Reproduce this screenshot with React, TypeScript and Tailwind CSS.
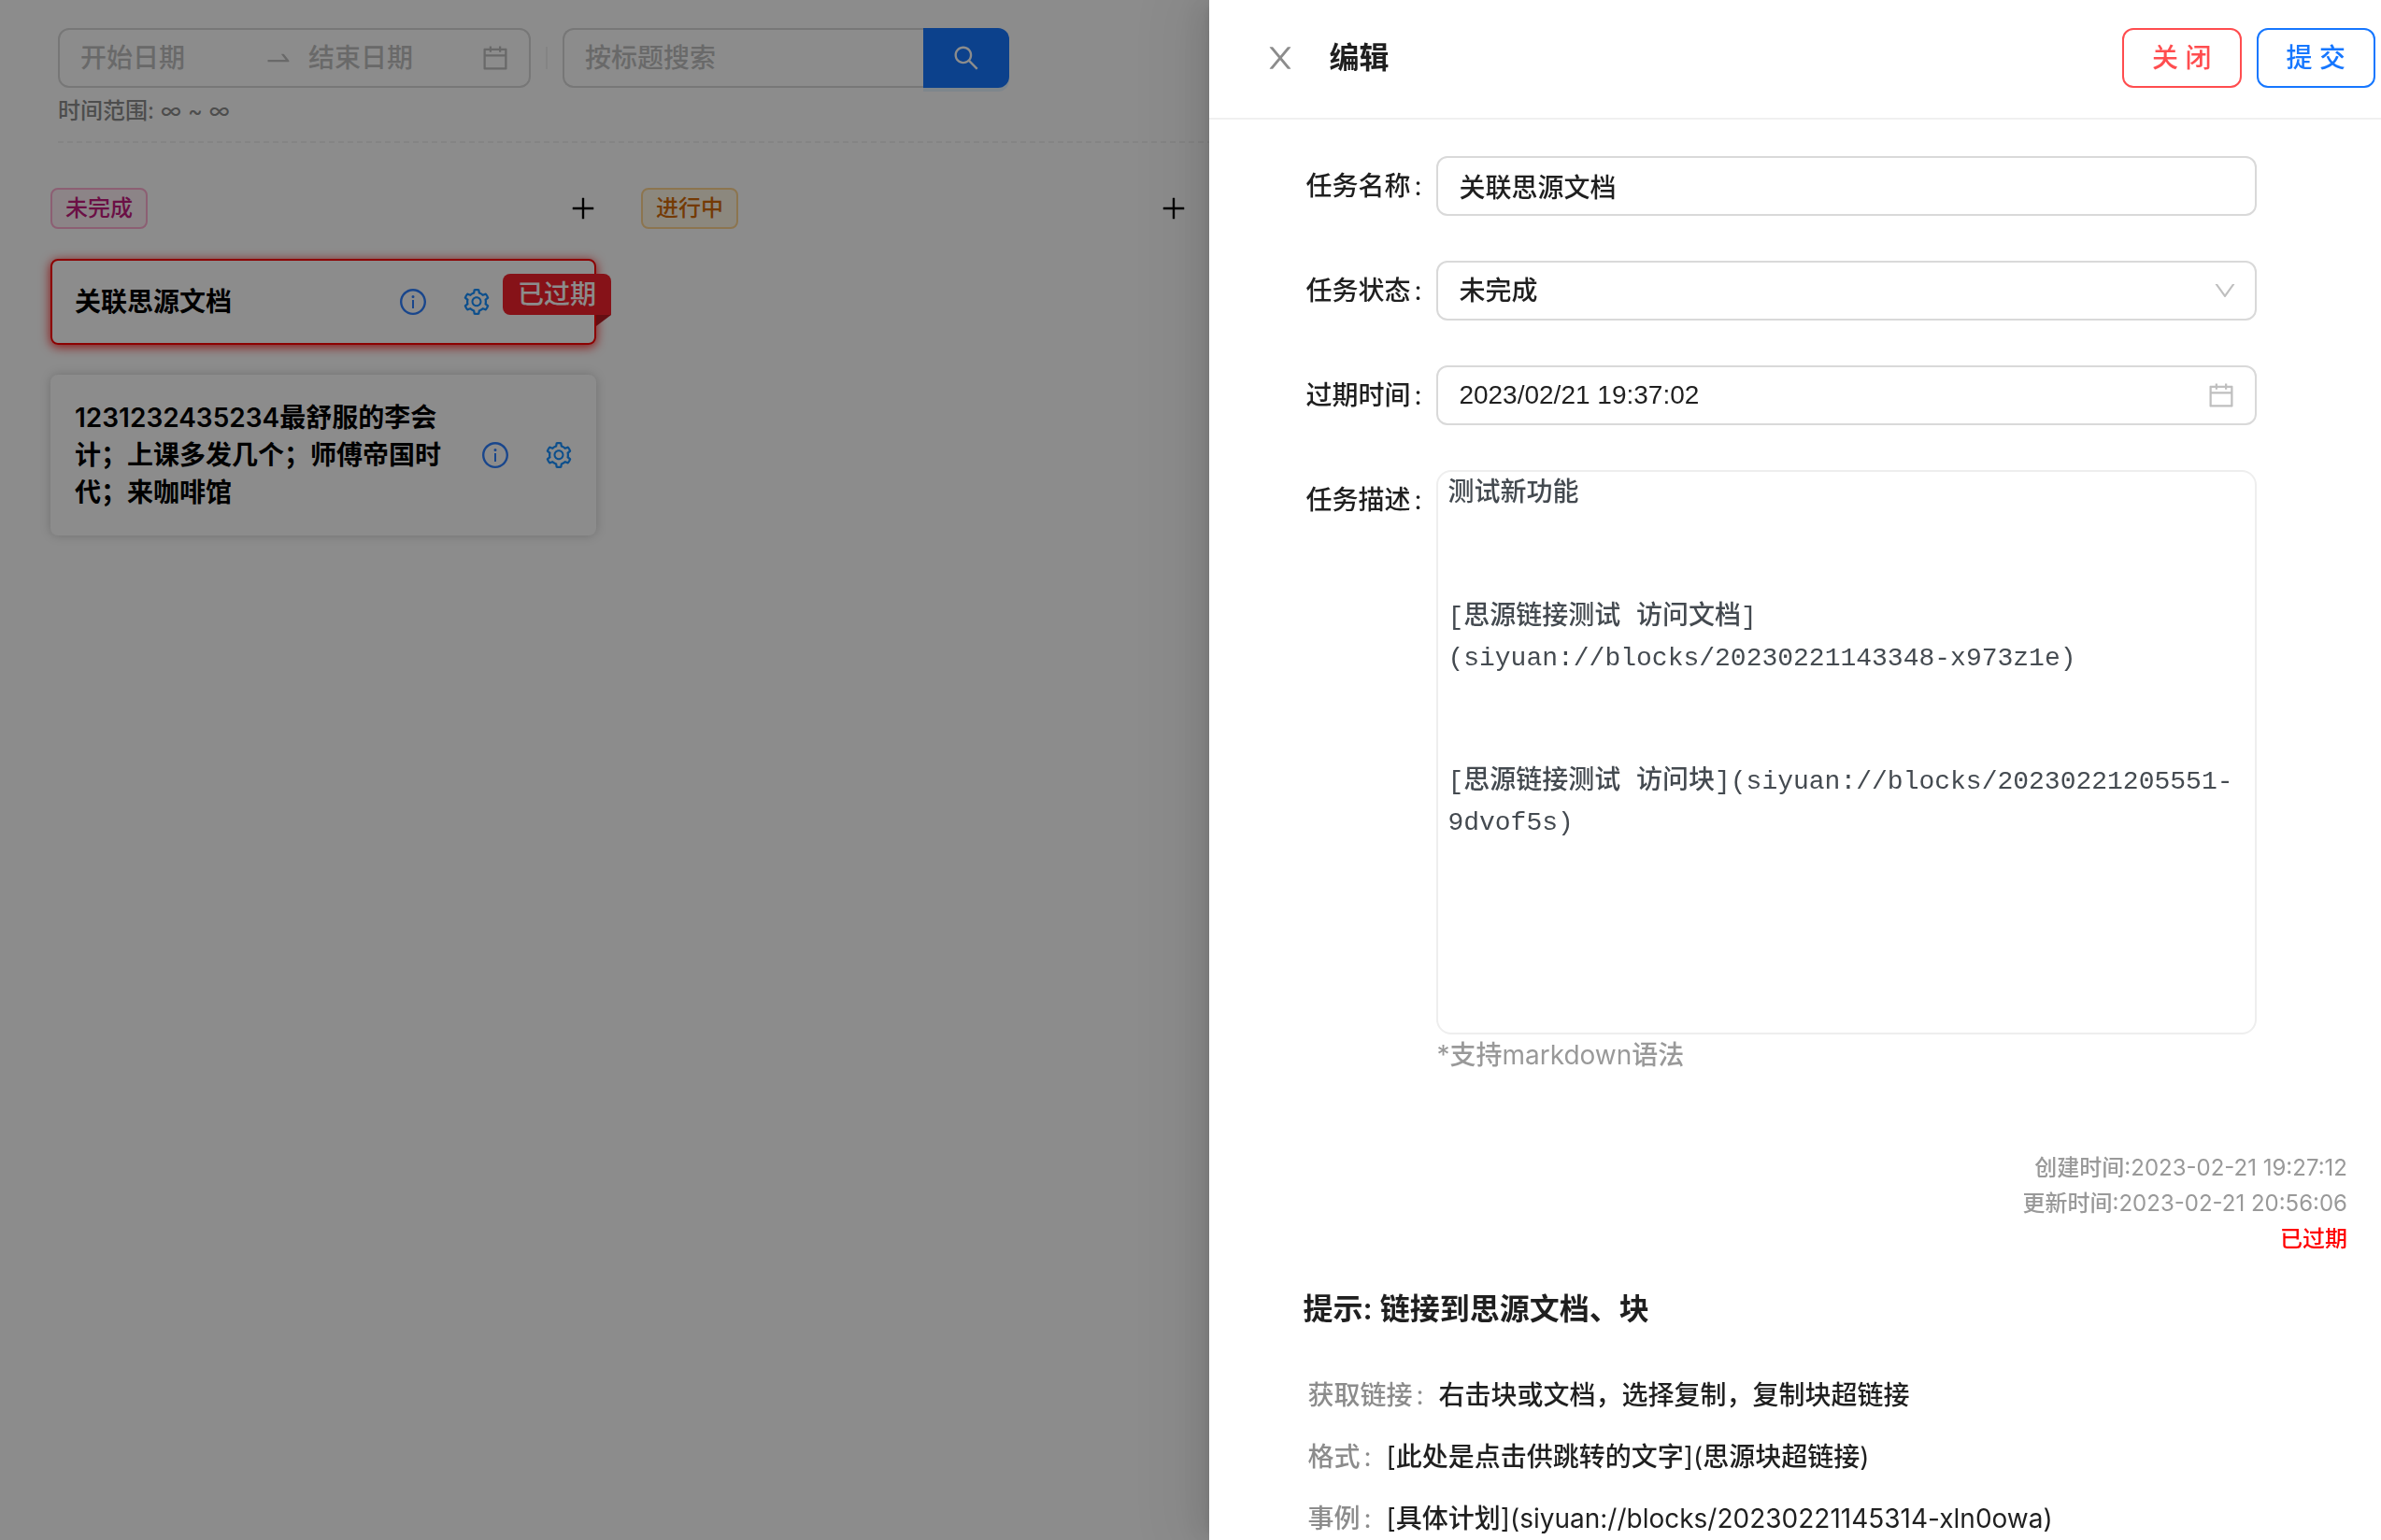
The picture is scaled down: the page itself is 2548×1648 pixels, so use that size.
import React from "react";
import {
  AiOutlineCalendar,
  AiOutlineDown,
  AiOutlineInfoCircle,
  AiOutlinePlus,
  AiOutlineSearch,
  AiOutlineSetting,
  AiOutlineSwapRight,
} from "react-icons/ai";

function CloseIcon() {
  return (
    <svg viewBox="64 64 896 896" className="size-8" fill="currentColor" aria-hidden="true">
      <path d="M563.8 512l262.5-312.9c4.4-5.2.7-13.1-6.1-13.1h-79.8c-4.7 0-9.2 2.1-12.3 5.7L511.6 449.8 295.1 191.7c-3-3.6-7.5-5.7-12.3-5.7H203c-6.8 0-10.5 7.9-6.1 13.1L459.4 512 196.9 824.9A7.95 7.95 0 0 0 203 838h79.8c4.7 0 9.2-2.1 12.3-5.7l216.5-258.1 216.5 258.1c3 3.6 7.5 5.7 12.3 5.7h79.8c6.8 0 10.5-7.9 6.1-13.1L563.8 512z" />
    </svg>
  );
}

function ColumnHeader({ title, tone }: { title: string; tone: string }) {
  return (
    <header className="flex items-center justify-between">
      <span className={`rounded-lg border-2 px-3.5 text-2xl leading-10 ${tone}`}>{title}</span>
      <button type="button" aria-label={`新增${title}`} className="-mr-0.5 text-black">
        <AiOutlinePlus size={32} />
      </button>
    </header>
  );
}

function CardActions() {
  return (
    <div className="flex shrink-0 items-center gap-9">
      <button type="button" aria-label="详情" className="text-[#2f80ff]">
        <AiOutlineInfoCircle size={32} />
      </button>
      <button type="button" aria-label="设置" className="text-[#1890ff]">
        <AiOutlineSetting size={32} />
      </button>
    </div>
  );
}

function Board() {
  return (
    <div className="min-h-screen bg-white text-[28px]">
      <div className="pt-[30px] pl-[62px]">
        <form className="flex items-center gap-4">
          <div className="flex h-16 w-[506px] items-center rounded-xl border-2 border-[#d9d9d9] pr-5 pl-[22px]">
            <input
              aria-label="开始日期"
              placeholder="开始日期"
              className="w-[196px] outline-none placeholder:text-[#bfbfbf]"
            />
            <AiOutlineSwapRight size={32} className="shrink-0 text-[#bfbfbf]" />
            <input
              aria-label="结束日期"
              placeholder="结束日期"
              className="ml-4 min-w-0 flex-1 outline-none placeholder:text-[#bfbfbf]"
            />
            <AiOutlineCalendar size={32} className="shrink-0 text-[#bfbfbf]" />
          </div>
          <span className="h-6 w-0.5 bg-[#f0f0f0]" />
          <div className="flex h-16">
            <input
              aria-label="按标题搜索"
              placeholder="按标题搜索"
              className="w-[386px] rounded-l-xl border-2 border-r-0 border-[#d9d9d9] px-[22px] outline-none placeholder:text-[#bfbfbf]"
            />
            <button
              type="submit"
              aria-label="搜索"
              className="flex w-[92px] items-center justify-center rounded-r-xl bg-[#1677ff] text-white shadow-[0_4px_0_rgba(5,145,255,0.1)]"
            >
              <AiOutlineSearch size={32} />
            </button>
          </div>
        </form>
        <p className="mt-1.5 text-2xl leading-[38px] text-[#8c8c8c]">
          时间范围<Latin>: ∞ ~ ∞</Latin>
        </p>
        <div className="mt-[13px] border-t-2 border-dashed border-[#f0f0f0]" />
      </div>

      <main className="mt-12 flex items-start gap-12 pl-[54px]">
        <section className="w-[584px]">
          <ColumnHeader title="未完成" tone="border-[#ffadd2] bg-[#fff0f6] text-[#c41d7f]" />
          <article className="relative mt-8 flex h-[92px] items-center justify-between rounded-lg border-2 border-[#ff0000] pr-[110px] pl-6 shadow-[0_2px_12px_rgba(255,0,0,0.9)]">
            <h3 className="font-semibold text-black">关联思源文档</h3>
            <CardActions />
            <div className="absolute top-3.5 -right-[18px] rounded-lg rounded-br-none bg-[#f5222d] px-4 leading-[44px] text-white">
              已过期
              <span className="absolute top-full right-0 border-t-12 border-r-16 border-t-[#b81a22] border-r-transparent" />
            </div>
          </article>
          <article className="mt-8 flex items-center justify-between gap-9 rounded-lg border-2 border-transparent py-6 pr-[22px] pl-6 shadow-[0_0_12px_rgba(0,0,0,0.2)]">
            <h3 className="leading-10 font-semibold text-black">
              1231232435234最舒服的李会计；上课多发几个；师傅帝国时代；来咖啡馆
            </h3>
            <CardActions />
          </article>
        </section>
        <section className="w-[584px]">
          <ColumnHeader title="进行中" tone="border-[#ffd591] bg-[#fff7e6] text-[#d46b08]" />
        </section>
      </main>
    </div>
  );
}

function Field({ label, id, children }: { label: string; id: string; children: React.ReactNode }) {
  return (
    <div className="flex items-start">
      <label htmlFor={id} className="w-[140px] shrink-0 leading-[64px]">
        {label}
        <span className="ml-1 font-normal">:</span>
      </label>
      <div className="relative min-w-0 flex-1">{children}</div>
    </div>
  );
}

const description = `测试新功能


[思源链接测试 访问文档]
(siyuan://blocks/20230221143348-x973z1e)


[思源链接测试 访问块](siyuan://blocks/20230221205551-9dvof5s)`;

function Tip({ label, children }: { label: string; children: React.ReactNode }) {
  return (
    <div className="flex leading-[44px]">
      <dt className="text-[#8c8c8c]">
        {label}
        <span className="mr-4 ml-1 font-normal">:</span>
      </dt>
      <dd>{children}</dd>
    </div>
  );
}

function Latin({ children }: { children: React.ReactNode }) {
  return <span className="font-normal">{children}</span>;
}

function EditDrawer() {
  return (
    <aside
      role="dialog"
      aria-label="编辑"
      className="fixed inset-y-0 right-0 w-[49.2%] overflow-y-auto bg-white text-[28px] text-[#1f1f1f] shadow-[-12px_0_32px_0_rgba(0,0,0,0.08),-6px_0_12px_-8px_rgba(0,0,0,0.12),-18px_0_56px_16px_rgba(0,0,0,0.05)]"
    >
      <header className="flex h-32 items-center border-b-2 border-[#f0f0f0] pr-1.5 pb-0.5 pl-[60px]">
        <button type="button" aria-label="关闭面板" className="text-[#8c8c8c]">
          <CloseIcon />
        </button>
        <h2 className="ml-9 flex-1 text-[32px] font-semibold">编辑</h2>
        <div className="flex gap-4">
          <button type="button" className="h-16 rounded-xl border-2 border-[#ff4d4f] px-[30px] text-[#ff4d4f]">
            关 闭
          </button>
          <button type="button" className="h-16 rounded-xl border-2 border-[#1677ff] px-[30px] text-[#1677ff]">
            提 交
          </button>
        </div>
      </header>

      <form className="flex flex-col gap-12 pt-[39px] pr-[133px] pl-[103px]">
        <Field label="任务名称" id="task-name">
          <input
            id="task-name"
            defaultValue="关联思源文档"
            className="block h-16 w-full rounded-xl border-2 border-[#d9d9d9] px-[22px] outline-none"
          />
        </Field>
        <Field label="任务状态" id="task-status">
          <select
            id="task-status"
            defaultValue="未完成"
            className="block h-16 w-full appearance-none rounded-xl border-2 border-[#d9d9d9] bg-white px-[22px] outline-none"
          >
            <option>未完成</option>
            <option>进行中</option>
          </select>
          <AiOutlineDown size={28} className="pointer-events-none absolute top-[18px] right-5 text-[#bfbfbf]" />
        </Field>
        <Field label="过期时间" id="task-due">
          <input
            id="task-due"
            defaultValue="2023/02/21 19:37:02"
            className="block h-16 w-full rounded-xl border-2 border-[#d9d9d9] px-[22px] font-['Liberation_Sans',sans-serif] font-normal outline-none"
          />
          <AiOutlineCalendar size={32} className="pointer-events-none absolute top-4 right-[22px] text-[#bfbfbf]" />
        </Field>
        <Field label="任务描述" id="task-desc">
          <textarea
            id="task-desc"
            defaultValue={description}
            className="block h-[604px] w-full resize-none rounded-2xl border-2 border-[#eeeeee] px-2.5 pt-0.5 font-['Liberation_Mono','Noto_Sans_CJK_SC',monospace] leading-[44px] text-[#444a50] outline-none"
          />
          <p className="leading-[44px] text-[#999999]">
            <Latin>*</Latin>支持<Latin>markdown</Latin>语法
          </p>
        </Field>
      </form>

      <div className="mt-20 pr-9 text-right text-2xl leading-[38px] text-[#999999]">
        <p>
          创建时间<Latin>:2023-02-21 19:27:12</Latin>
        </p>
        <p>
          更新时间<Latin>:2023-02-21 20:56:06</Latin>
        </p>
        <p className="text-[#ff0000]">已过期</p>
      </div>

      <section className="pl-[100px]">
        <h3 className="mt-[30px] text-[32px] leading-[52px] font-semibold">提示: 链接到思源文档、块</h3>
        <dl className="mt-11 flex flex-col gap-[22px] pl-[5px]">
          <Tip label="获取链接">右击块或文档，选择复制，复制块超链接</Tip>
          <Tip label="格式">
            <Latin>[</Latin>此处是点击供跳转的文字<Latin>](</Latin>思源块超链接<Latin>)</Latin>
          </Tip>
          <Tip label="事例">
            <Latin>[</Latin>具体计划<Latin>](siyuan://blocks/20230221145314-xln0owa)</Latin>
          </Tip>
        </dl>
      </section>
    </aside>
  );
}

export default function App() {
  return (
    <div className="relative min-h-screen overflow-hidden font-['Inter','Noto_Sans_CJK_SC',sans-serif] font-medium">
      <Board />
      <div className="absolute inset-0 bg-black/45" />
      <EditDrawer />
    </div>
  );
}
